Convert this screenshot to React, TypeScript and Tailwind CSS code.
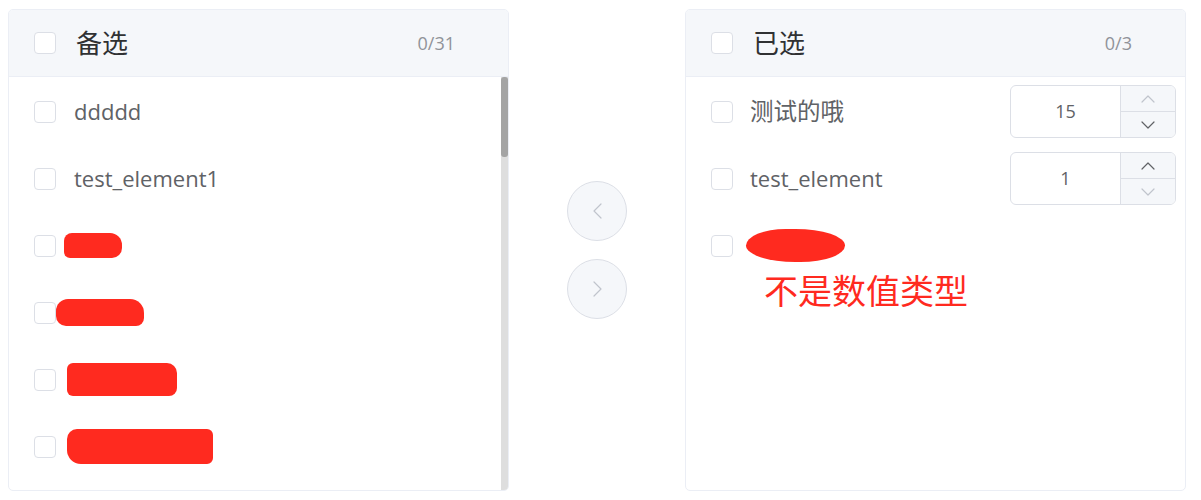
import React from "react";

type Item = { label?: string; blob?: { w: number; h: number; ml: number; r: string } };

const leftItems: Item[] = [
  { label: "ddddd" },
  { label: "test_element1" },
  { blob: { w: 58, h: 25, ml: -10, r: "rounded-[8px_12px_10px_6px]" } },
  { blob: { w: 88, h: 27, ml: -18, r: "rounded-[12px_14px_8px_10px]" } },
  { blob: { w: 110, h: 33, ml: -7, r: "rounded-[6px_10px_8px_6px]" } },
  { blob: { w: 146, h: 35, ml: -7, r: "rounded-[10px_6px_6px_14px]" } },
];

function Checkbox() {
  return <span className="w-[22px] h-[22px] shrink-0 rounded-[4px] border border-[#dcdfe6] bg-white" />;
}

function Chevron({ dir, className }: { dir: "up" | "down" | "left" | "right"; className: string }) {
  const pts = {
    up: "1,7 7,1 13,7",
    down: "1,1 7,7 13,1",
    left: "8,1 1,8 8,15",
    right: "1,1 8,8 1,15",
  }[dir];
  const vertical = dir === "left" || dir === "right";
  return (
    <svg
      width={vertical ? 9 : 14}
      height={vertical ? 16 : 8}
      viewBox={vertical ? "0 0 9 16" : "0 0 14 8"}
      fill="none"
      className={className}
    >
      <polyline points={pts} stroke="currentColor" strokeWidth="1.2" strokeLinecap="round" strokeLinejoin="round" />
    </svg>
  );
}

function Blob({ w, h, ml, r }: { w: number; h: number; ml: number; r: string }) {
  return <span className={`block bg-[#ff2a1f] ${r}`} style={{ width: w, height: h, marginLeft: ml }} />;
}

function NumberInput({ value, upOn, downOn }: { value: number; upOn: boolean; downOn: boolean }) {
  return (
    <div className="flex w-[166px] h-[53px] rounded-[6px] border border-[#dcdfe6] overflow-hidden bg-white">
      <div className="flex-1 flex items-center justify-center text-[18px] text-[#606266]">{value}</div>
      <div className="w-[55px] flex flex-col bg-[#f5f7fa] border-l border-[#dcdfe6]">
        <div className="flex-1 flex items-center justify-center border-b border-[#dcdfe6]">
          <Chevron dir="up" className={upOn ? "text-[#606266]" : "text-[#c0c4cc]"} />
        </div>
        <div className="flex-1 flex items-center justify-center">
          <Chevron dir="down" className={downOn ? "text-[#606266]" : "text-[#c0c4cc]"} />
        </div>
      </div>
    </div>
  );
}

function Header({ title, count }: { title: string; count: string }) {
  return (
    <div className="h-[67px] shrink-0 flex items-center pl-[25px] pr-[53px] bg-[#f5f7fa] border-b border-[#ebeef5]">
      <Checkbox />
      <span className="ml-[20px] text-[26px] text-[#303133] leading-none">{title}</span>
      <span className="ml-auto text-[18px] text-[#909399]">{count}</span>
    </div>
  );
}

export default function App() {
  return (
    <div className="w-[1201px] h-[500px] bg-white font-['Open_Sans','Noto_Sans_CJK_SC',sans-serif] flex pt-[9px] pl-[8px]">
      {/* 备选 */}
      <div className="w-[501px] h-[482px] flex flex-col rounded-[5px] border border-[#ebeef5] overflow-hidden">
        <Header title="备选" count="0/31" />
        <div className="flex-1 flex min-h-0">
          <div className="flex-1 pt-[1px] overflow-hidden">
            {leftItems.map((it, i) => (
              <div key={i} className="h-[67px] flex items-center pl-[25px]">
                <Checkbox />
                <span className="ml-[18px] text-[22px] text-[#606266]">
                  {it.label ?? (it.blob && <Blob {...it.blob} />)}
                </span>
              </div>
            ))}
          </div>
          <div className="w-[7px] flex flex-col bg-[#dedede]">
            <div className="h-[80px] rounded-[3px] bg-[#a4a4a4]" />
          </div>
        </div>
      </div>

      {/* 穿梭按钮 */}
      <div className="w-[176px] h-[482px] flex flex-col items-center justify-center gap-[18px]">
        <button className="w-[60px] h-[60px] rounded-full border border-[#dcdfe6] bg-[#f5f7fa] flex items-center justify-center">
          <Chevron dir="left" className="text-[#c0c4cc]" />
        </button>
        <button className="w-[60px] h-[60px] rounded-full border border-[#dcdfe6] bg-[#f5f7fa] flex items-center justify-center">
          <Chevron dir="right" className="text-[#c0c4cc]" />
        </button>
      </div>

      {/* 已选 */}
      <div className="w-[501px] h-[482px] flex flex-col rounded-[5px] border border-[#ebeef5] overflow-hidden">
        <Header title="已选" count="0/3" />
        <div className="flex-1 pt-[1px]">
          <div className="h-[67px] flex items-center pl-[25px] pr-[9px]">
            <Checkbox />
            <span className="ml-[17px] text-[23.5px] text-[#606266]">测试的哦</span>
            <div className="ml-auto">
              <NumberInput value={15} upOn={false} downOn={true} />
            </div>
          </div>
          <div className="h-[67px] flex items-center pl-[25px] pr-[9px]">
            <Checkbox />
            <span className="ml-[17px] text-[22px] text-[#606266]">test_element</span>
            <div className="ml-auto">
              <NumberInput value={1} upOn={true} downOn={false} />
            </div>
          </div>
          <div className="h-[67px] flex items-center pl-[25px]">
            <Checkbox />
            <span className="ml-[13px] block w-[99px] h-[33px] bg-[#ff2a1f] rounded-[40%_50%_45%_50%/50%_50%_50%_50%]" />
          </div>
          <div className="-mt-[5px] pl-[78px] text-[34px] leading-none text-[#ff2a1f]">不是数值类型</div>
        </div>
      </div>
    </div>
  );
}
